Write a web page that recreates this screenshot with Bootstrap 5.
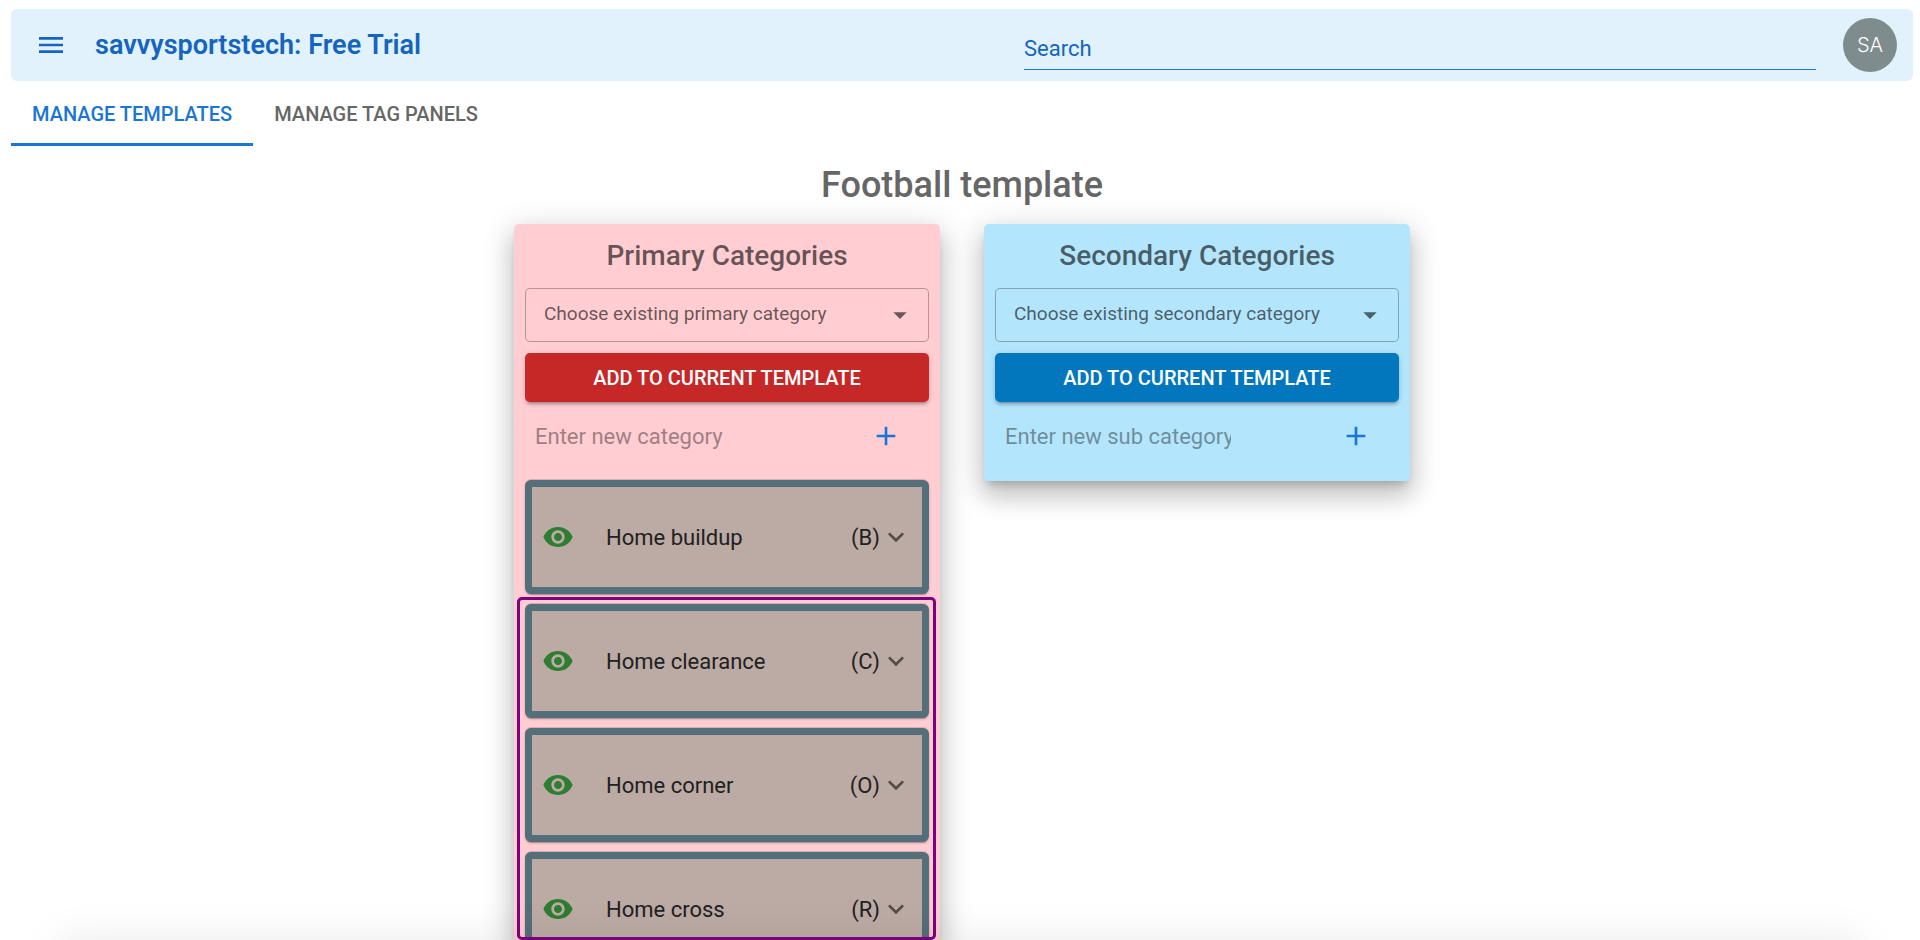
<!DOCTYPE html>
<html lang="en">
<head>
<meta charset="utf-8">
<meta name="viewport" content="width=device-width, initial-scale=1">
<title>savvysportstech: Free Trial</title>
<link href="https://cdn.jsdelivr.net/npm/bootstrap@5.3.0/dist/css/bootstrap.min.css" rel="stylesheet">
<style>
  body { font-family: Roboto, "Liberation Sans", sans-serif; font-size: 22px; color: #212121; }
  .page { height: 100vh; padding: 9px 7px 0 11px; }
  .page::after {
    content: ""; position: absolute; left: 60px; right: 60px; top: 100%; height: 40px;
    box-shadow: 0 0 44px rgba(0, 0, 0, .09); pointer-events: none;
  }
  .topbar { height: 72px; padding: 0 16px 0 24px; background: #e1f2fc; border-radius: 6px; }
  .icon { width: 32px; height: 32px; fill: currentColor; display: block; }
  .plain { border: 0; background: none; padding: 0; }
  .menu-btn { color: #1565c0; }
  .brand { font-size: 27px; font-weight: 600; line-height: 32px; color: #1565c0; margin-left: 28px; }
  .brand-side { flex: 989 1 0; }
  .search-side { flex: 792 1 0; margin-right: 27px; }
  .search-box {
    height: 44px; margin-top: 6px; padding: 2px 0 0; border: 0; border-bottom: 1px solid #1976d2;
    border-radius: 0; background: transparent; font-size: 22px; color: #1565c0;
  }
  .search-box::placeholder { color: #1565c0; opacity: 1; }
  .avatar { width: 54px; height: 54px; border-radius: 50%; background: #7f8c8d; color: #fff; font: 300 20px/54px Inter, sans-serif; }
  .tabs .nav-link {
    height: 65px; padding: 3px 21px 0; border-radius: 0; border-bottom: 3px solid transparent;
    font-size: 20px; font-weight: 500; color: #666;
  }
  .tabs .nav-link.active { color: #1976d2; border-color: #1976d2; }
  .page-title { font-size: 36px; font-weight: 500; line-height: 44px; color: #666; margin: 17px 0; }
  .columns { gap: 44px; }
  .panel {
    flex: 0 1 426px; min-width: 0; padding: 11px; border-radius: 5px;
    box-shadow: 0 7px 9px -4px rgba(0,0,0,.2), 0 16px 23px 2px rgba(0,0,0,.14), 0 6px 30px 5px rgba(0,0,0,.12);
  }
  .panel-primary { background: #ffcdd2; border-radius: 5px 5px 0 0; padding-bottom: 0; }
  .panel-secondary { background: #b3e5fc; }
  .panel-title { font-size: 28px; font-weight: 500; line-height: 42px; margin: 0 0 11px; color: rgba(0, 0, 0, .6); }
  .pick {
    height: 54px; padding: 0 56px 2px 18px; border: 1px solid rgba(0, 0, 0, .28); border-radius: 5px;
    font-size: 19px; color: rgba(0, 0, 0, .6); background-color: transparent;
    background-image: url("data:image/svg+xml,%3csvg xmlns='http://www.w3.org/2000/svg' viewBox='0 0 24 24'%3e%3cpath fill='%23000' fill-opacity='.58' d='M7 10l5 5 5-5z'/%3e%3c/svg%3e");
    background-size: 32px; background-position: right 12px center;
  }
  .add {
    height: 49px; margin: 11px 0 10px; padding: 0; border: 0; border-radius: 5px; font-size: 20px; font-weight: 500;
    box-shadow: 0 4px 2px -3px rgba(0,0,0,.2), 0 3px 3px rgba(0,0,0,.14), 0 1px 6px rgba(0,0,0,.12);
  }
  .add, .add:hover { color: #fff; }
  .add-red, .add-red:hover { background: #c62828; }
  .add-blue, .add-blue:hover { background: #0277bd; }
  .new-row { height: 48px; padding: 0 27px 0 10px; }
  .panel-primary .new-row { margin-bottom: 20px; }
  .panel-secondary .new-row { margin-bottom: 10px; }
  .new-row input { width: 226px; height: 32px; font-size: 22px; outline: 0; }
  .new-row input::placeholder { color: #000; opacity: .38; }
  .new-row button { color: #1976d2; }
  .entry {
    height: 114px; flex: none; margin-bottom: 10px; padding: 0 10px; background: #bcaaa4;
    border: 7px solid #546e7a; border-radius: 6px;
    box-shadow: 0 -1px 0 rgba(0,0,0,.12), 0 3px 1px -2px rgba(0,0,0,.2), 0 1px 3px rgba(0,0,0,.2);
  }
  .entry .eye { color: #2e7d32; margin-right: 32px; }
  .entry .chevron { color: rgba(0, 0, 0, .56); }
  .focus-group {
    flex: 1 1 0; min-height: 0; margin: -7px -7px 0 -8px; padding: 4px 4px 0 5px;
    border: 3px solid purple; border-radius: 5px; overflow: auto; scrollbar-width: none;
  }
  .focus-group::-webkit-scrollbar { display: none; }
</style>
</head>
<body>
<svg class="d-none" aria-hidden="true">
  <symbol id="i-menu" viewBox="0 0 24 24"><path d="M3 18h18v-2H3zm0-5h18v-2H3zm0-7v2h18V6z"/></symbol>
  <symbol id="i-plus" viewBox="0 0 24 24"><path d="M19 13h-6v6h-2v-6H5v-2h6V5h2v6h6z"/></symbol>
  <symbol id="i-eye" viewBox="0 0 24 24"><path d="M12 4.5C7 4.5 2.73 7.61 1 12c1.73 4.39 6 7.5 11 7.5s9.27-3.11 11-7.5c-1.73-4.39-6-7.5-11-7.5M12 17c-2.76 0-5-2.24-5-5s2.24-5 5-5 5 2.24 5 5-2.24 5-5 5m0-8c-1.66 0-3 1.34-3 3s1.34 3 3 3 3-1.34 3-3-1.34-3-3-3"/></symbol>
  <symbol id="i-down" viewBox="0 0 24 24"><path d="M16.59 8.59 12 13.17 7.41 8.59 6 10l6 6 6-6z"/></symbol>
</svg>

<div class="page d-flex flex-column position-relative overflow-hidden">
  <header class="topbar d-flex align-items-center flex-shrink-0">
    <div class="brand-side d-flex align-items-center">
      <button class="plain menu-btn" type="button" aria-label="Menu"><svg class="icon"><use href="#i-menu"/></svg></button>
      <span class="brand text-nowrap">savvysportstech: Free Trial</span>
    </div>
    <div class="search-side">
      <input class="search-box form-control shadow-none" type="search" placeholder="Search" aria-label="Search">
    </div>
    <button class="plain avatar" type="button" aria-label="Account">SA</button>
  </header>

  <nav class="tabs nav flex-shrink-0">
    <a class="nav-link active d-flex align-items-center" href="#templates" aria-current="page">MANAGE TEMPLATES</a>
    <a class="nav-link d-flex align-items-center" href="#panels">MANAGE TAG PANELS</a>
  </nav>

  <h1 class="page-title text-center flex-shrink-0">Football template</h1>

  <main class="columns d-flex justify-content-center flex-grow-1">
    <section class="panel panel-primary d-flex flex-column">
      <h2 class="panel-title text-center">Primary Categories</h2>
      <select class="pick form-select flex-shrink-0" aria-label="Existing primary category"><option>Choose existing primary category</option></select>
      <button class="add add-red btn w-100 flex-shrink-0" type="button">ADD TO CURRENT TEMPLATE</button>
      <div class="new-row d-flex align-items-center justify-content-between flex-shrink-0">
        <input class="plain" type="text" placeholder="Enter new category" aria-label="New category">
        <button class="plain" type="button" aria-label="Add category"><svg class="icon"><use href="#i-plus"/></svg></button>
      </div>
      <div class="entry d-flex align-items-center">
        <button class="plain eye" type="button" aria-label="Toggle visibility"><svg class="icon"><use href="#i-eye"/></svg></button>
        <span class="flex-grow-1">Home buildup</span><span>(B)</span>
        <button class="plain chevron" type="button" aria-label="Expand"><svg class="icon"><use href="#i-down"/></svg></button>
      </div>
      <div class="focus-group d-flex flex-column">
        <div class="entry d-flex align-items-center">
          <button class="plain eye" type="button" aria-label="Toggle visibility"><svg class="icon"><use href="#i-eye"/></svg></button>
          <span class="flex-grow-1">Home clearance</span><span>(C)</span>
          <button class="plain chevron" type="button" aria-label="Expand"><svg class="icon"><use href="#i-down"/></svg></button>
        </div>
        <div class="entry d-flex align-items-center">
          <button class="plain eye" type="button" aria-label="Toggle visibility"><svg class="icon"><use href="#i-eye"/></svg></button>
          <span class="flex-grow-1">Home corner</span><span>(O)</span>
          <button class="plain chevron" type="button" aria-label="Expand"><svg class="icon"><use href="#i-down"/></svg></button>
        </div>
        <div class="entry d-flex align-items-center">
          <button class="plain eye" type="button" aria-label="Toggle visibility"><svg class="icon"><use href="#i-eye"/></svg></button>
          <span class="flex-grow-1">Home cross</span><span>(R)</span>
          <button class="plain chevron" type="button" aria-label="Expand"><svg class="icon"><use href="#i-down"/></svg></button>
        </div>
      </div>
    </section>

    <section class="panel panel-secondary align-self-start">
      <h2 class="panel-title text-center">Secondary Categories</h2>
      <select class="pick form-select" aria-label="Existing secondary category"><option>Choose existing secondary category</option></select>
      <button class="add add-blue btn w-100" type="button">ADD TO CURRENT TEMPLATE</button>
      <div class="new-row d-flex align-items-center justify-content-between">
        <input class="plain" type="text" placeholder="Enter new sub category" aria-label="New sub category">
        <button class="plain" type="button" aria-label="Add sub category"><svg class="icon"><use href="#i-plus"/></svg></button>
      </div>
    </section>
  </main>
</div>
<script src="https://cdn.jsdelivr.net/npm/bootstrap@5.3.0/dist/js/bootstrap.bundle.min.js"></script>
</body>
</html>
